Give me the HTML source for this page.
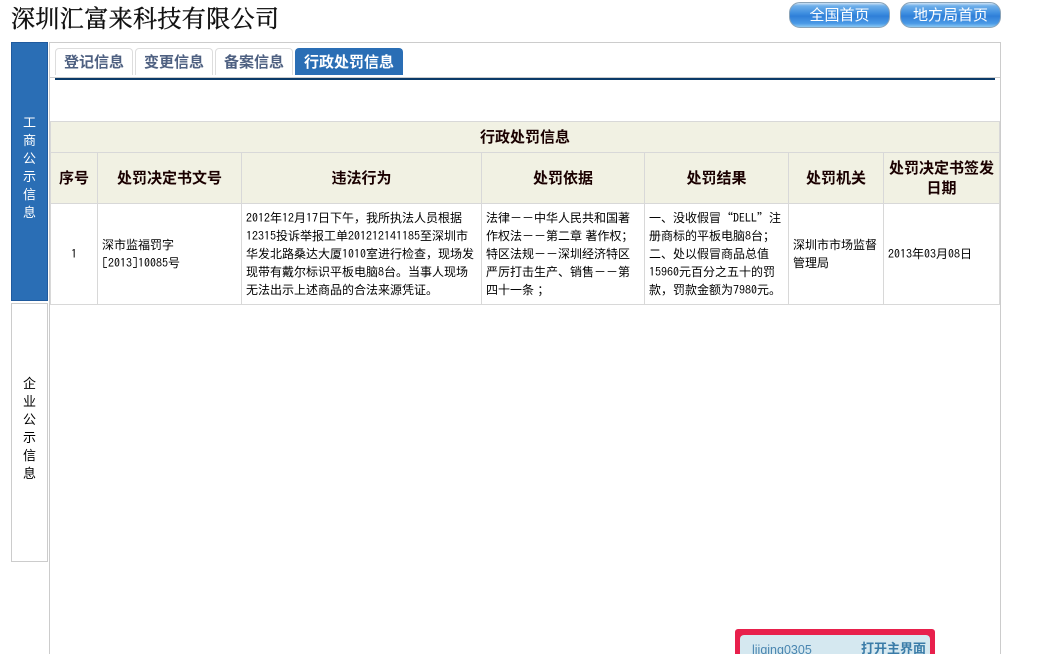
<!DOCTYPE html>
<html lang="zh-CN"><head><meta charset="utf-8"><title>深圳汇富来科技有限公司</title>
<style>
html,body{margin:0;padding:0;background:#fff;width:1039px;height:654px;overflow:hidden}
body{position:relative;font-family:"Liberation Sans","WenQuanYi Zen Hei","Noto Sans CJK SC",sans-serif;color:#000}
.a{position:absolute;box-sizing:border-box}
.title{left:11px;top:5px;font:normal 24px/30px "Liberation Serif","Noto Serif CJK SC",serif;-webkit-text-stroke:.4px #111;color:#111;white-space:nowrap;letter-spacing:.4px}
.btn{top:2px;height:26px;border-radius:11px;border:1px solid #8aa3b8;background:linear-gradient(#cfe3f5 0,#6fb0ea 12%,#3f8fe0 42%,#2f7fd8 55%,#4a99e6 85%,#8cc8f2 100%);color:#fff;font-size:15px;line-height:26px;text-align:center;white-space:nowrap}
.tab{top:48px;height:27px;border:1px solid #ddd;border-bottom:0;border-radius:4px 4px 0 0;font-weight:bold;font-size:15px;line-height:27px;text-align:center;color:#4e6081;background:#fff;white-space:nowrap}
.side{left:11px;width:37px;font-size:13px;line-height:18px;text-align:center}
table{position:absolute;left:50px;top:121px;width:950px;height:184px;border-collapse:collapse;table-layout:fixed;font-size:12px;line-height:18px}
td,th{border:1px solid #d8d8d8;padding:0 4px;white-space:nowrap}
th{background:#f1f1e3;font-size:15px;line-height:20px;font-weight:bold;color:#1a0000;text-align:center;padding:2px 2px 0}
td{text-align:left;padding:0 4px}
.d{font-family:"IPAGothic","Liberation Mono",monospace;font-size:12px}
.q{font-family:"Noto Sans CJK SC",sans-serif}
</style></head><body>
<div class="a title">深圳汇富来科技有限公司</div>
<div class="a btn" style="left:789px;width:101px">全国首页</div>
<div class="a btn" style="left:900px;width:101px">地方局首页</div>

<div class="a" style="left:49px;top:42px;width:952px;height:620px;border:1px solid #ccc;border-bottom:0"></div>
<div class="a side" style="top:42px;height:259px;background:#2a6eb5;border:1px solid #1f5a9e;color:#fff;padding-top:71px">工<br>商<br>公<br>示<br>信<br>息</div>
<div class="a side" style="top:303px;height:259px;background:#fff;border:1px solid #ccc;color:#000;padding-top:71px">企<br>业<br>公<br>示<br>信<br>息</div>

<div class="a tab" style="left:55px;width:78px">登记信息</div>
<div class="a tab" style="left:135px;width:78px">变更信息</div>
<div class="a tab" style="left:215px;width:78px">备案信息</div>
<div class="a tab" style="left:295px;width:108px;background:#2a6eb5;border-color:#2a6eb5;color:#fff">行政处罚信息</div>
<div class="a" style="left:50px;top:77px;width:950px;height:1px;background:#ccc"></div>
<div class="a" style="left:55px;top:78px;width:940px;height:2px;background:#0b3a68"></div>

<table>
<colgroup><col style="width:47px"><col style="width:144px"><col style="width:240px"><col style="width:163px"><col style="width:144px"><col style="width:95px"><col style="width:116px"></colgroup>
<tr style="height:31px"><th colspan="7">行政处罚信息</th></tr>
<tr style="height:51px"><th>序号</th><th>处罚决定书文号</th><th>违法行为</th><th>处罚依据</th><th>处罚结果</th><th>处罚机关</th><th style="white-space:normal">处罚决定书签发日期</th></tr>
<tr style="height:101px">
<td style="text-align:center"><span class="d">1</span></td>
<td>深市监福罚字<br><span class="d">[2013]10085</span>号</td>
<td><span class="d">2012</span>年<span class="d">12</span>月<span class="d">17</span>日下午，我所执法人员根据<br><span class="d">12315</span>投诉举报工单<span class="d">201212141185</span>至深圳市<br>华发北路桑达大厦<span class="d">1010</span>室进行检查，现场发<br>现带有戴尔标识平板电脑<span class="d">8</span>台。当事人现场<br>无法出示上述商品的合法来源凭证。</td>
<td>法律－－中华人民共和国著<br>作权法－－第二章 著作权；<br>特区法规－－深圳经济特区<br>严厉打击生产、销售－－第<br>四十一条 ；</td>
<td>一、没收假冒<span class="q">“</span><span class="d">DELL</span><span class="q">”</span>注<br>册商标的平板电脑<span class="d">8</span>台；<br>二、处以假冒商品总值<br><span class="d">15960</span>元百分之五十的罚<br>款，罚款金额为<span class="d">7980</span>元。</td>
<td>深圳市市场监督<br>管理局</td>
<td><span class="d">2013</span>年<span class="d">03</span>月<span class="d">08</span>日</td>
</tr>
</table>

<div class="a" style="left:735px;top:629px;width:200px;height:30px;background:#e8204c;border-radius:3px 3px 0 0"></div>
<div class="a" style="left:740px;top:635px;width:190px;height:25px;background:#d5e8f0;border-radius:4px 4px 0 0"></div>
<div class="a" style="left:752px;top:642px;font-size:12.5px;line-height:16px;color:#4a86b0;white-space:nowrap">lijqing0305</div>
<div class="a" style="left:861px;top:641px;font-size:13px;line-height:16px;font-weight:bold;color:#3a7ca8;white-space:nowrap">打开主界面</div>
</body></html>
